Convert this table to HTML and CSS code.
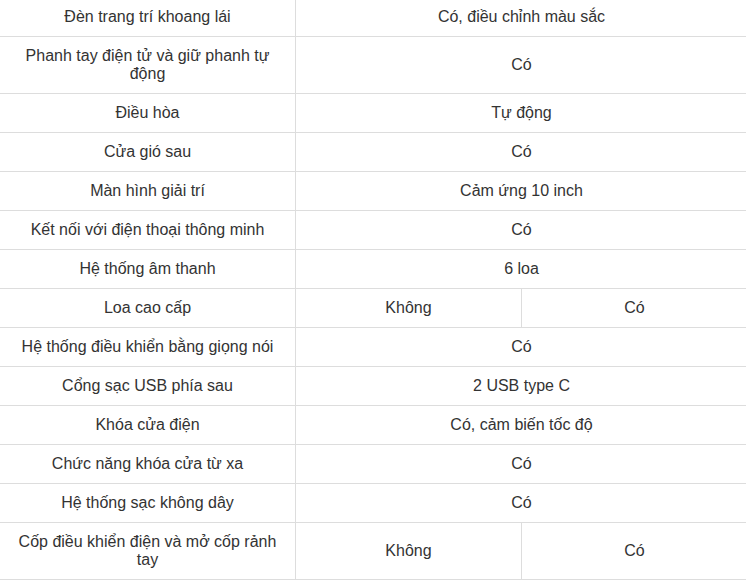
FILE: index.html
```html
<!DOCTYPE html>
<html lang="vi">
<head>
<meta charset="utf-8">
<link rel="stylesheet" href="styles.css">
</head>
<body>
<table class="spec">
  <colgroup><col class="c1"><col class="c2"><col class="c3"></colgroup>
  <tbody>
    <tr><td>Đèn trang trí khoang lái</td><td colspan="2">Có, điều chỉnh màu sắc</td></tr>
    <tr><td>Phanh tay điện tử và giữ phanh tự động</td><td colspan="2">Có</td></tr>
    <tr><td>Điều hòa</td><td colspan="2">Tự động</td></tr>
    <tr><td>Cửa gió sau</td><td colspan="2">Có</td></tr>
    <tr><td>Màn hình giải trí</td><td colspan="2">Cảm ứng 10 inch</td></tr>
    <tr><td>Kết nối với điện thoại thông minh</td><td colspan="2">Có</td></tr>
    <tr><td>Hệ thống âm thanh</td><td colspan="2">6 loa</td></tr>
    <tr><td>Loa cao cấp</td><td>Không</td><td>Có</td></tr>
    <tr><td>Hệ thống điều khiển bằng giọng nói</td><td colspan="2">Có</td></tr>
    <tr><td>Cổng sạc USB phía sau</td><td colspan="2">2 USB type C</td></tr>
    <tr><td>Khóa cửa điện</td><td colspan="2">Có, cảm biến tốc độ</td></tr>
    <tr><td>Chức năng khóa cửa từ xa</td><td colspan="2">Có</td></tr>
    <tr><td>Hệ thống sạc không dây</td><td colspan="2">Có</td></tr>
    <tr><td>Cốp điều khiển điện và mở cốp rảnh tay</td><td>Không</td><td>Có</td></tr>
  </tbody>
</table>
</body>
</html>
```

FILE: styles.css
```css
html, body {
  margin: 0;
  padding: 0;
  background: #fff;
  overflow: hidden;
}
.spec {
  border-collapse: collapse;
  table-layout: fixed;
  width: 748px;
  margin: -3px 0 0 -1px;
  font-family: "Liberation Sans", Arial, sans-serif;
  font-size: 16px;
  line-height: 18px;
  color: #333;
}
.c1 { width: 296px; }
.c2 { width: 226px; }
.c3 { width: 226px; }
.spec td {
  border: 1px solid #ddd;
  padding: 10px;
  text-align: center;
  vertical-align: middle;
}
```
